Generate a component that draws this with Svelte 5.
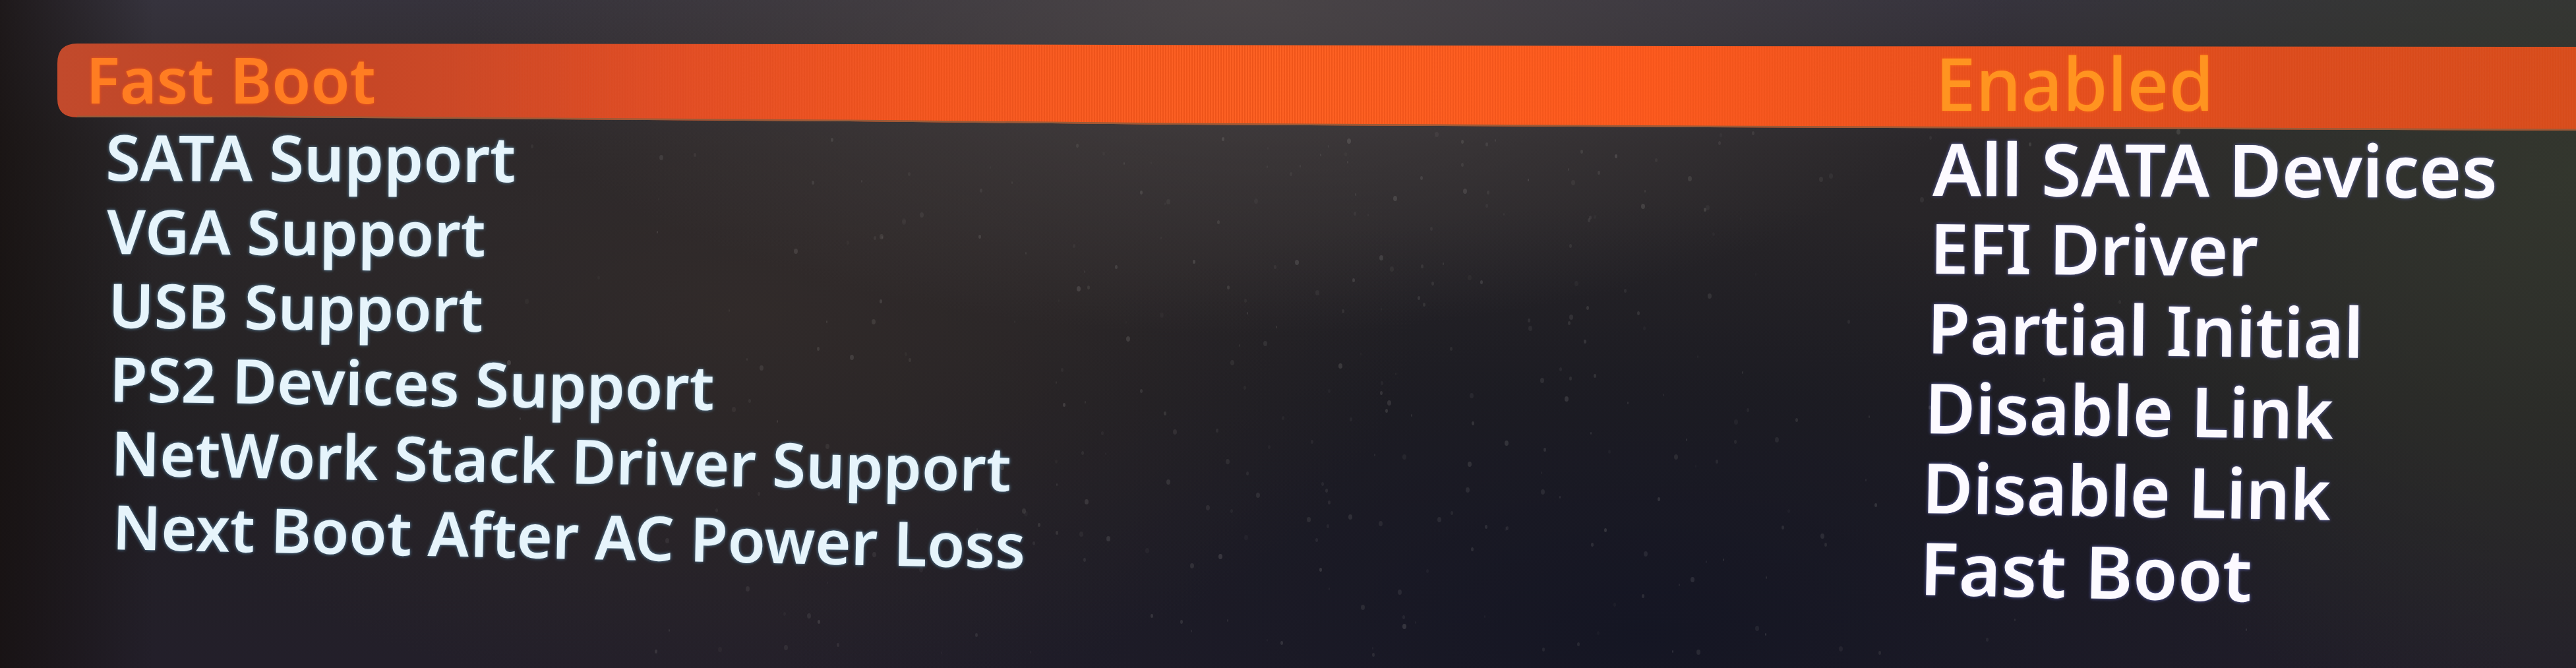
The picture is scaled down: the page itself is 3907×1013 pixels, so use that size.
<script>
  const settings = [
    { name: 'Fast Boot', value: 'Enabled' },
    { name: 'SATA Support', value: 'All SATA Devices' },
    { name: 'VGA Support', value: 'EFI Driver' },
    { name: 'USB Support', value: 'Partial Initial' },
    { name: 'PS2 Devices Support', value: 'Disable Link' },
    { name: 'NetWork Stack Driver Support', value: 'Disable Link' },
    { name: 'Next Boot After AC Power Loss', value: 'Fast Boot' }
  ];
  const selected = 0;

  // Dust on the panel: a seeded scatter, so that it is the same on every load.
  let seed = 41;
  const random = () => {
    seed = (seed * 16807) % 2147483647;
    return seed / 2147483647;
  };
  const dust = Array.from({ length: 320 }, () => ({
    x: Math.round(1000 + 1100 * (random() + random() + random() - 0.6)),
    y: Math.round(200 + 800 * random()),
    r: 1 + Math.round(random() * 2),
    o: 0.04 + random() * 0.14
  }));
</script>

<main class="screen">
  <svg class="dust" viewBox="0 0 3907 1013" preserveAspectRatio="xMidYMid slice" aria-hidden="true">
    {#each dust as d}
      <ellipse cx={d.x} cy={d.y} rx={d.r} ry={d.r + 1} fill="#b9b8b4" opacity={d.o} />
    {/each}
  </svg>

  <div class="menu">
    <svg class="bar" viewBox="0 0 3820 134" preserveAspectRatio="none" aria-hidden="true">
      <defs>
        <linearGradient id="glow">
          <stop offset="0" stop-color="#c24a2c" />
          <stop offset="0.08" stop-color="#bf4425" />
          <stop offset="0.16" stop-color="#cd4927" />
          <stop offset="0.25" stop-color="#e34f26" />
          <stop offset="0.35" stop-color="#f65922" />
          <stop offset="0.48" stop-color="#fe6224" />
          <stop offset="0.63" stop-color="#fd5b1f" />
          <stop offset="0.74" stop-color="#ee5420" />
          <stop offset="0.88" stop-color="#dd4e20" />
          <stop offset="1" stop-color="#d84f1f" />
        </linearGradient>
        <linearGradient id="fade">
          <stop offset="0.15" stop-color="#000" />
          <stop offset="0.35" stop-color="#777" />
          <stop offset="0.47" stop-color="#ddd" />
          <stop offset="0.62" stop-color="#555" />
          <stop offset="1" stop-color="#555" />
        </linearGradient>
        <pattern id="lines" width="4" height="134" patternUnits="userSpaceOnUse">
          <rect width="2" height="134" fill="#d23c08" opacity="0.4" />
        </pattern>
        <mask id="linesMask"><rect width="3820" height="134" fill="url(#fade)" /></mask>
        <clipPath id="shape">
          <path d="M30 0 L1200 1 L2500 4 L3820 5 V132 L2500 127 L1700 123 L1200 118 L300 112 H30 Q0 112 0 84 V30 Q0 0 30 0Z" />
        </clipPath>
      </defs>
      <g clip-path="url(#shape)">
        <rect width="3820" height="134" fill="url(#glow)" />
        <rect width="3820" height="134" fill="url(#lines)" mask="url(#linesMask)" />
        <path d="M30 112 H300 L1200 118 L1700 123 L2500 127 L3820 132" fill="none" stroke="#9a5a38" stroke-width="5" />
      </g>
    </svg>

    <ul class="names">
      {#each settings as s, i}
        <li class:selected={i === selected} class:large={i < 2} style="--i:{i}"><span>{s.name}</span></li>
      {/each}
    </ul>
    <ul class="values">
      {#each settings as s, i}
        <li class:selected={i === selected} class:large={i < 2 || i === 6} style="--i:{i}"><span>{s.value}</span></li>
      {/each}
    </ul>
  </div>
</main>

<style>
  :global(body) {
    margin: 0;
    background: #1c1b22;
  }
  .screen {
    position: relative;
    box-sizing: border-box;
    min-height: 100vh;
    padding-top: 66px;
    overflow: hidden;
    font-family: 'Noto Sans', 'Open Sans', sans-serif;
    font-weight: 600;
    background:
      linear-gradient(90deg, rgba(20, 14, 12, 0.7), rgba(20, 14, 12, 0) 6%),
      radial-gradient(ellipse 30% 50% at 48% 0%, rgba(80, 74, 74, 0.75), rgba(80, 74, 74, 0)),
      radial-gradient(ellipse 24% 85% at 100% 25%, rgba(52, 56, 46, 0.9), rgba(52, 56, 46, 0)),
      radial-gradient(ellipse 26% 60% at 29% 46%, rgba(54, 46, 44, 0.7), rgba(54, 46, 44, 0)),
      radial-gradient(ellipse 34% 65% at 64% 95%, rgba(18, 20, 34, 0.85), rgba(18, 20, 34, 0)),
      linear-gradient(180deg, #36333d 0%, #2a272a 22%, #222023 60%, #231f2a 100%);
  }
  .dust {
    position: absolute;
    inset: 0;
    width: 100%;
    height: 100%;
  }
  .menu {
    position: relative;
    display: grid;
    grid-template-columns: 3fr 1fr;
  }
  .bar {
    position: absolute;
    top: 0;
    left: 87px;
    width: calc(100% - 87px);
    height: 134px;
  }
  ul {
    position: relative;
    margin: 0;
    padding: 0;
    list-style: none;
    white-space: nowrap;
  }
  span {
    display: inline-block;
    transform: rotate(calc(var(--i) * 0.2deg));
    transform-origin: 0 80%;
  }
  .names {
    color: #e6f4fb;
    font-size: 93px;
    line-height: 114px;
    text-shadow: 0 0 5px rgba(120, 190, 235, 0.7);
  }
  .names li {
    height: 112px;
    padding-left: calc(158px + var(--i) * 2px);
  }
  .names .large {
    font-size: 96px;
  }
  .names .selected {
    height: 114px;
    padding-left: 130px;
    line-height: 108px;
    color: #ff7d22;
    text-shadow: 0 0 4px rgba(255, 90, 20, 0.8);
  }
  .values {
    color: #fcfaff;
    font-size: 105px;
    line-height: 124px;
    text-shadow: 0 0 5px rgba(130, 140, 250, 0.7);
  }
  .values li {
    height: 121px;
    margin-left: calc(5px - var(--i) * 4px);
  }
  .values .large {
    font-size: 110px;
  }
  .values .selected {
    height: 126px;
    line-height: 118px;
    color: #ff9420;
    font-weight: 500;
    text-shadow: 0 0 4px rgba(255, 110, 20, 0.8);
  }
</style>
